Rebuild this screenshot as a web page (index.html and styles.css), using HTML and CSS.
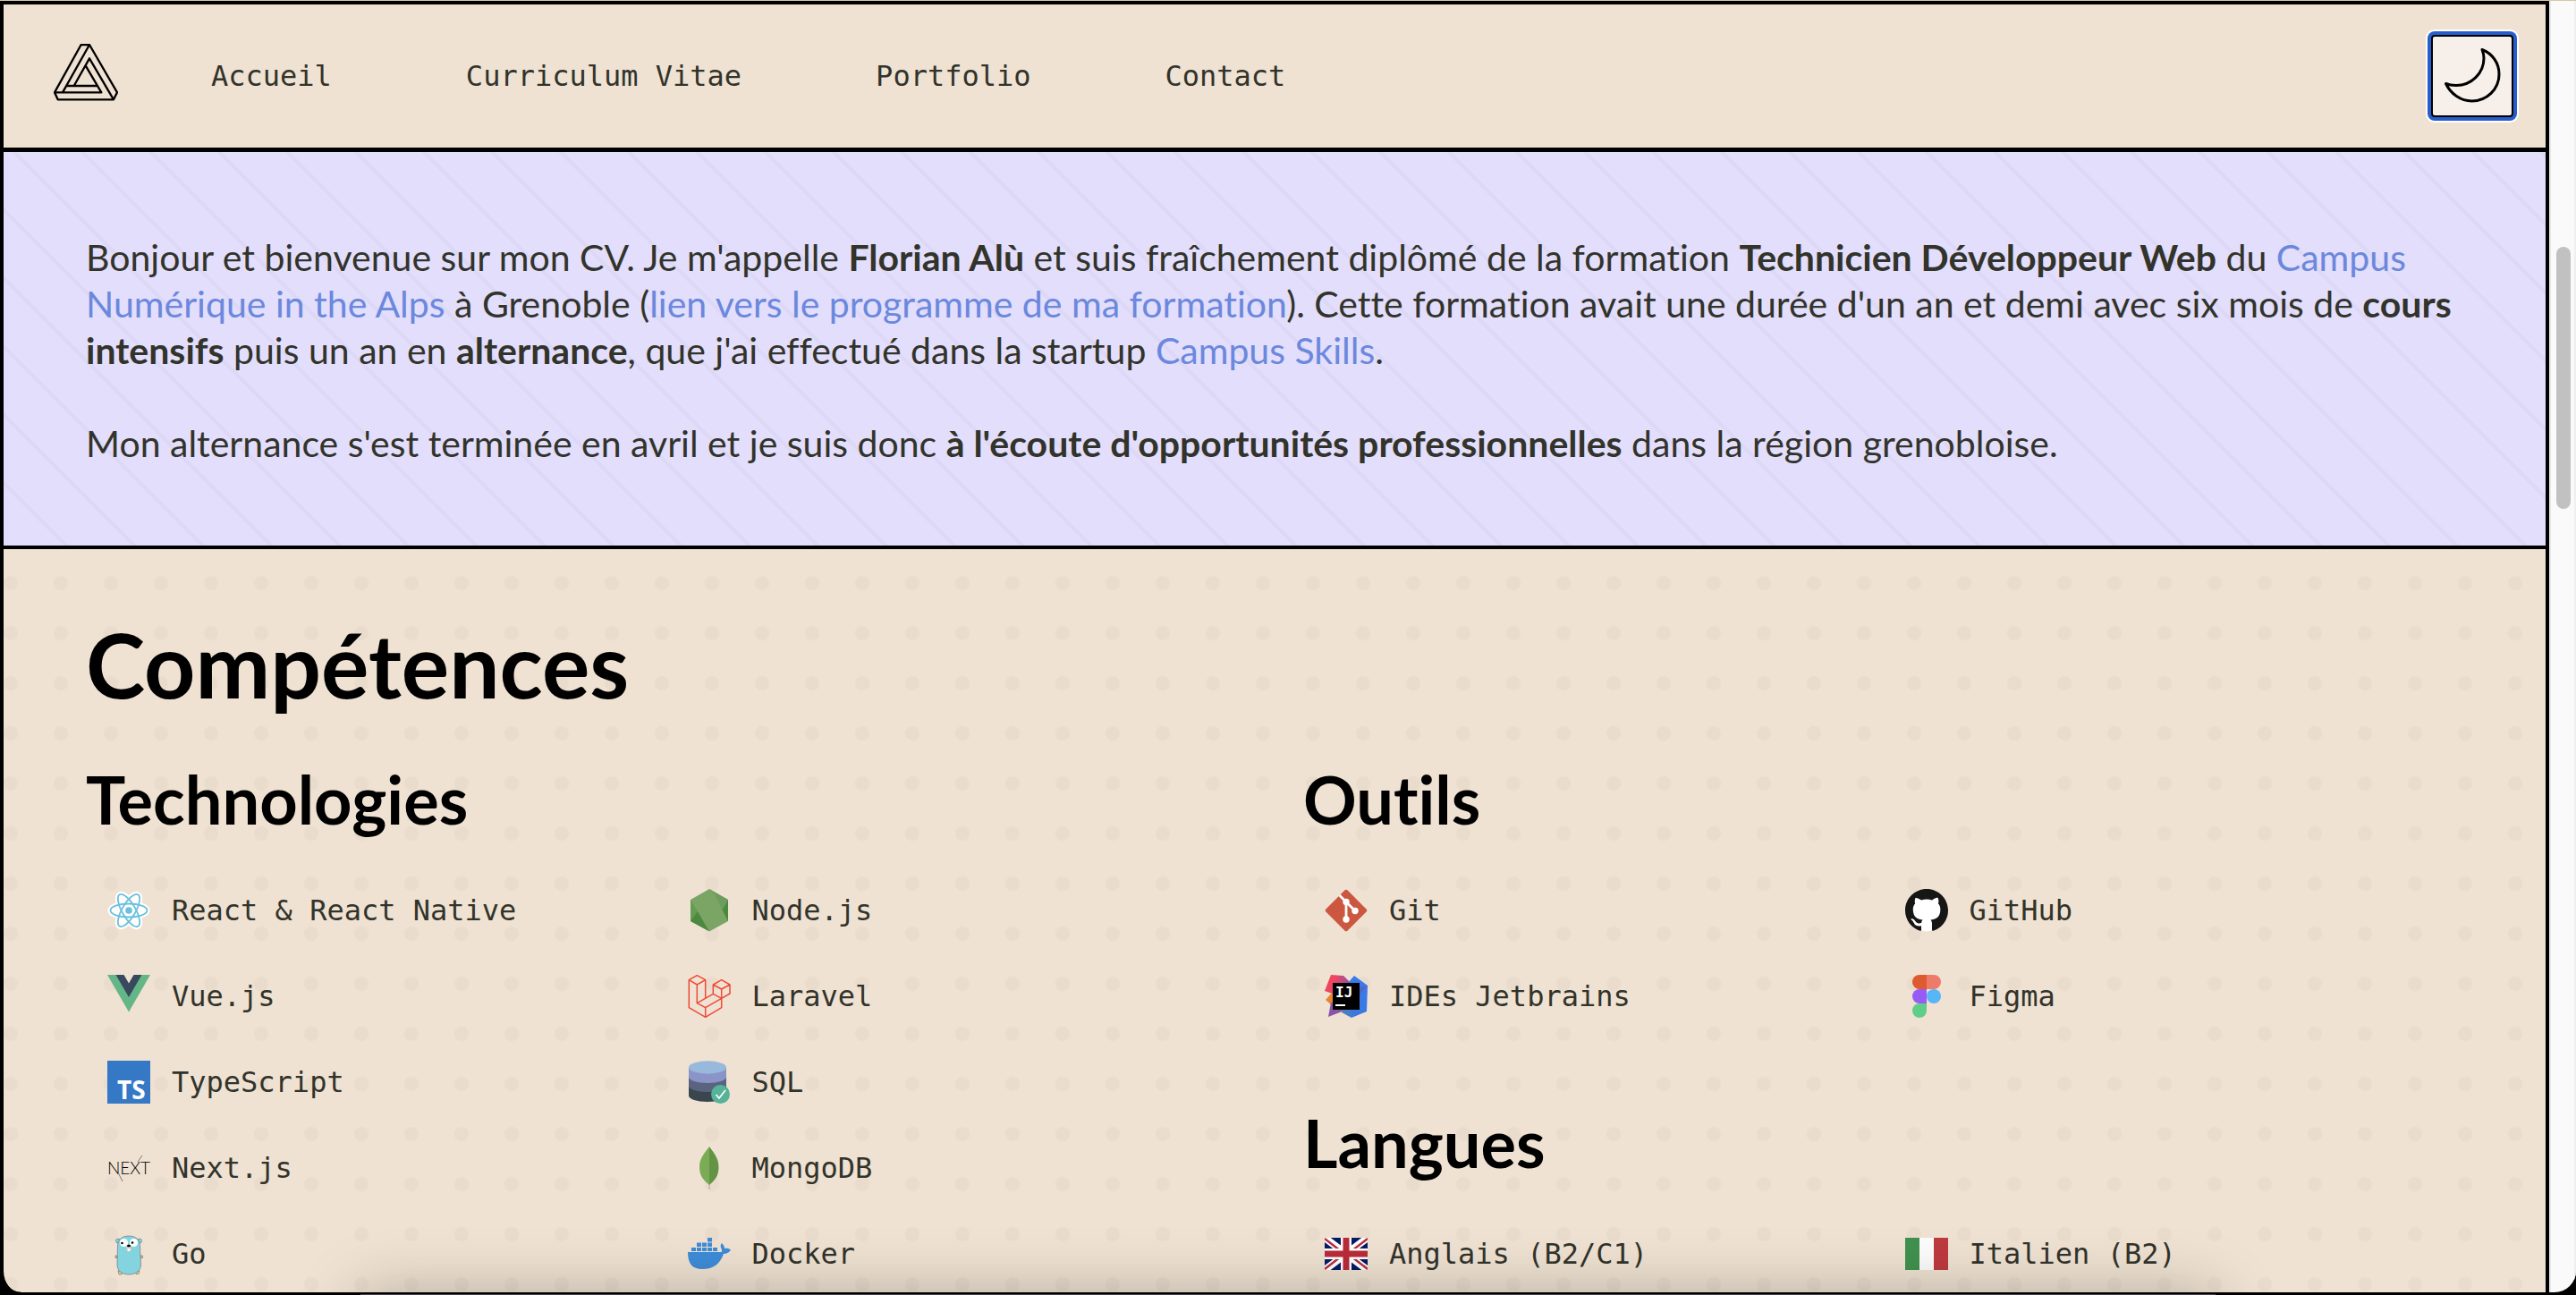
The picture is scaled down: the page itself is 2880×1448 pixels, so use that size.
FILE: index.html
```html
<!DOCTYPE html>
<html lang="fr">
<head>
<meta charset="utf-8">
<title>Florian Alù – Curriculum Vitae</title>
<link rel="stylesheet" href="styles.css">
</head>
<body>
<div class="window">
  <div class="page">
    <header class="header">
      <a href="#" class="logo" aria-label="Accueil">
        <svg viewBox="30 33 216 192" width="72" height="64" fill="none" stroke="#000" stroke-width="7" stroke-linejoin="round">
          <path d="M122 36H150L243 196 231 220H44L33 196ZM150 36 60 196M33 196H190L137 106M72 174H177M98 174 150 82 231 220"/>
        </svg>
      </a>
      <nav class="nav">
        <a href="#">Accueil</a>
        <a href="#">Curriculum Vitae</a>
        <a href="#">Portfolio</a>
        <a href="#">Contact</a>
      </nav>
      <button type="button" class="theme" aria-label="Mode sombre">
        <svg viewBox="0 0 68 68" width="68" height="68" fill="none" stroke="#000" stroke-width="3" stroke-linejoin="round">
          <path d="M45 4.500C57 9 64 20 64 32C64 49 50 62 33.500 62C21 62 10 54 4.500 42.500C8 44 12 44.500 16 44.500C33 44.500 47 31 47 14C47 11 46 7 45 4.500Z"/>
        </svg>
      </button>
    </header>

    <section class="intro">
      <p>Bonjour et bienvenue sur mon CV. Je m'appelle <strong>Florian Alù</strong> et suis fraîchement diplômé de la formation <strong>Technicien Développeur Web</strong> du <a href="#">Campus Numérique in the Alps</a> à Grenoble (<a href="#">lien vers le programme de ma formation</a>). Cette formation avait une durée d'un an et demi avec six mois de <strong>cours intensifs</strong> puis un an en <strong>alternance</strong>, que j'ai effectué dans la startup <a href="#">Campus Skills</a>.</p>
      <p>Mon alternance s'est terminée en avril et je suis donc <strong>à l'écoute d'opportunités professionnelles</strong> dans la région grenobloise.</p>
    </section>

    <main class="skills">
      <h1>Compétences</h1>
      <div class="columns">
        <section class="group">
          <h2>Technologies</h2>
          <ul class="list">
            <li>
              <svg class="icon" viewBox="0 0 48 48">
                <g fill="#fff" stroke="#fff" stroke-width="6"><ellipse cx="24" cy="24" rx="20.500" ry="7.500"/><ellipse cx="24" cy="24" rx="20.500" ry="7.500" transform="rotate(60 24 24)"/><ellipse cx="24" cy="24" rx="20.500" ry="7.500" transform="rotate(120 24 24)"/></g>
                <g fill="none" stroke="#6bc0de" stroke-width="1.800"><ellipse cx="24" cy="24" rx="20.500" ry="7.500"/><ellipse cx="24" cy="24" rx="20.500" ry="7.500" transform="rotate(60 24 24)"/><ellipse cx="24" cy="24" rx="20.500" ry="7.500" transform="rotate(120 24 24)"/></g>
                <circle cx="24" cy="24" r="3.800" fill="#6bc0de"/>
              </svg>
              <span>React &amp; React Native</span>
            </li>
            <li>
              <svg class="icon" viewBox="0 0 48 48">
                <path fill="#7aa565" d="M24 0 45 12V36L24 47.500 3 36V12Z"/>
                <path fill="#6d9d5e" d="M24 0 45 12 38.500 24 29.500 5Z"/>
                <path fill="#659c52" d="M3 12V36L11 25Z"/>
                <path fill="#4d8841" d="M3 36 11 25 23.500 47ZM45 12V36L38.500 23.500Z"/>
              </svg>
              <span>Node.js</span>
            </li>
            <li>
              <svg class="icon" viewBox="0 0 48 48">
                <path fill="#64b687" d="M0 0H48L24 41.500Z"/>
                <path fill="#38495d" d="M9.500 0H38.500L24 25Z"/>
                <path fill="#efe2d2" d="M18.500 0H29.500L24 9.500Z"/>
              </svg>
              <span>Vue.js</span>
            </li>
            <li>
              <svg class="icon" viewBox="0 0 48 48" fill="none" stroke="#ef4a37" stroke-width="1.500" stroke-linejoin="round">
                <path d="M19.700 26V5.700L10.300.7 1.300 5.700V36.700L19.700 47.300 37.700 36.700V16M1.300 5.700 10.300 11 19.700 5.700M10.300 11V31.700L19.700 36.700 37.700 26.300M19.700 36.700V47.300M10.300 31.700 28.300 21.300M28.300 11 37.700 5.700 47 11V21L37.700 26.300 28.300 21.300V11L37.700 16 47 11"/>
              </svg>
              <span>Laravel</span>
            </li>
            <li>
              <svg class="icon" viewBox="0 0 48 48">
                <rect width="48" height="48" fill="#3478c6"/>
                <text class="ts" x="11" y="43">TS</text>
              </svg>
              <span>TypeScript</span>
            </li>
            <li>
              <svg class="icon" viewBox="0 0 48 48">
                <path fill="#3a464e" d="M1 7V39C1 43 10 46 22 46S43 43 43 39V7Z"/>
                <path fill="#5a6380" d="M1 7V28C1 32 10 35 22 35S43 32 43 28V7Z"/>
                <path fill="#8b94c8" d="M1 7V18C1 22 10 25 22 25S43 22 43 18V7Z"/>
                <ellipse cx="22" cy="7.500" rx="21" ry="7.200" fill="#98b8dc"/>
                <circle cx="36.500" cy="37.500" r="10.500" fill="#56b398"/>
                <path d="M31.500 38 35 42 42 33" fill="none" stroke="#fff" stroke-width="1.700"/>
              </svg>
              <span>SQL</span>
            </li>
            <li>
              <svg class="icon" viewBox="0 0 48 48">
                <text class="next" x="24" y="31">NEXT</text>
                <path d="M12 29 17 39M34 17 39 10" stroke="#777"/>
              </svg>
              <span>Next.js</span>
            </li>
            <li>
              <svg class="icon" viewBox="0 0 48 48">
                <path stroke="#c4bdb8" stroke-width="1.800" d="M24 38V48"/>
                <path fill="#7aac56" d="M24 0C20 6 13 12 13 23C13 33 18 38 24 43Z"/>
                <path fill="#659345" d="M24 0C28 6 34.500 12 34.500 23C34.500 33 30 38 24 43Z"/>
              </svg>
              <span>MongoDB</span>
            </li>
            <li>
              <svg class="icon" viewBox="0 0 48 48">
                <g fill="#84d4e0" stroke="#555" stroke-width=".5">
                  <circle cx="12" cy="9.500" r="2.500"/><circle cx="36" cy="9.500" r="2.500"/>
                  <path fill="#e6c79f" d="M11 26h-2v2.500h2zM37 26h2.500v2.500h-2.500zM12 43l1 4h3l1-3zM36 43l-1 3.500h-3l-1-3z"/>
                  <path d="M24 4C32 4 36 8 36.500 15L37.500 36C37.500 43 32 47 24 47S11 43 11 36L11.500 15C12 8 16 4 24 4Z"/>
                </g>
                <circle cx="18.500" cy="11.500" r="4.600" fill="#fff"/><circle cx="29.500" cy="11.500" r="4.600" fill="#fff"/>
                <circle cx="16.500" cy="12" r="1.300"/><circle cx="28" cy="11.500" r="1.300"/>
                <path fill="#e6c79f" d="M21 16h6v3h-6z"/><ellipse cx="24" cy="15" rx="2" ry="1.300"/><path fill="#fff" d="M22.500 18h3v3h-3z"/>
              </svg>
              <span>Go</span>
            </li>
            <li>
              <svg class="icon" viewBox="0 0 48 48" fill="#3f8cd8">
                <path d="M0 22H37C39 22 38 19 37 17C36 15 37 13 38 12C40 14 41 16 41 18C44 17.500 46 18 48 19.500C46 23 43 24 40 24C36 35 29 41 16 41C5 41 0 35 0 22Z"/>
                <path d="M22 6h5v4.500h-5zM10 11.500h5v4.500h-5zM16 11.500h5v4.500h-5zM22 11.500h5v4.500h-5zM4 17h5v4h-5zM10 17h5v4h-5zM16 17h5v4h-5zM22 17h5v4h-5zM28 17h5v4h-5z"/>
              </svg>
              <span>Docker</span>
            </li>
          </ul>
        </section>

        <div class="stack">
          <section class="group">
            <h2>Outils</h2>
            <ul class="list">
              <li>
                <svg class="icon" viewBox="0 0 48 48">
                  <rect x="7" y="7" width="34" height="34" rx="2" fill="#cc5740" transform="rotate(45 24 24)"/>
                  <path d="M16.500 7 24 14.500V34M24 14.500 34 24.500" fill="none" stroke="#fff" stroke-width="2.800"/>
                  <g fill="#fff"><circle cx="24" cy="14.500" r="3.700"/><circle cx="24" cy="34" r="3.700"/><circle cx="34" cy="24.500" r="3.700"/></g>
                </svg>
                <span>Git</span>
              </li>
              <li>
                <svg class="icon" viewBox="0 0 16 16">
                  <circle cx="8" cy="8" r="7.800" fill="#fff"/>
                  <path fill="#161614" d="M8 0C3.580 0 0 3.580 0 8c0 3.540 2.290 6.530 5.470 7.590.4.070.55-.17.55-.38 0-.19-.01-.82-.01-1.490-2.010.37-2.530-.49-2.690-.94-.09-.23-.48-.94-.82-1.130-.28-.15-.68-.52-.01-.53.63-.01 1.080.58 1.230.82.72 1.210 1.870.87 2.330.66.07-.52.28-.87.51-1.070-1.780-.2-3.640-.89-3.640-3.950 0-.87.31-1.590.82-2.150-.08-.2-.36-1.020.08-2.120 0 0 .67-.21 2.200.82.64-.18 1.320-.27 2-.27s1.360.09 2 .27c1.530-1.040 2.200-.82 2.200-.82.44 1.100.16 1.920.08 2.120.51.56.82 1.270.82 2.150 0 3.070-1.870 3.750-3.650 3.950.29.25.54.73.54 1.480 0 1.070-.01 1.930-.01 2.200 0 .21.15.46.55.38A8.010 8.010 0 0 0 16 8c0-4.420-3.580-8-8-8Z"/>
                </svg>
                <span>GitHub</span>
              </li>
              <li>
                <svg class="icon" viewBox="0 0 48 48">
                  <defs>
                    <linearGradient id="ij-a" x1="0" y1="0" x2="1" y2="0"><stop offset=".4" stop-color="#ee4560"/><stop offset="1" stop-color="#8a55a8"/></linearGradient>
                    <linearGradient id="ij-b" x1="0" y1="1" x2="1" y2="0"><stop offset="0" stop-color="#5b85a8"/><stop offset=".3" stop-color="#3a78e0"/><stop offset="1" stop-color="#3b7af0"/></linearGradient>
                  </defs>
                  <path fill="#e9862f" d="M9 19 1 28 9 35 18 30Z"/>
                  <path fill="#8a55a8" d="M7 31 4 47 22 40 30 30Z"/>
                  <path fill="url(#ij-a)" d="M7 0 21 1 29 9 20 25 0 18Z"/>
                  <path fill="url(#ij-b)" d="M33 1 48 12 47 41 30 48 19 42 26 9Z"/>
                  <path fill="#5068c4" d="M48 12 38 24V14Z"/>
                  <rect x="9" y="9" width="30" height="30"/>
                  <rect x="12" y="33" width="11" height="2" fill="#fff"/>
                  <text class="ij" x="12" y="25">IJ</text>
                </svg>
                <span>IDEs Jetbrains</span>
              </li>
              <li>
                <svg class="icon" viewBox="0 0 48 48">
                  <path fill="#de5a30" d="M24 0V16H16A8 8 0 0 1 16 0Z"/>
                  <path fill="#ee7b69" d="M24 0V16H32A8 8 0 0 0 32 0Z"/>
                  <path fill="#985cf6" d="M24 16V32H16A8 8 0 0 1 16 16Z"/>
                  <circle cx="32" cy="24" r="8" fill="#56b6f8"/>
                  <path fill="#60ce89" d="M24 32V40A8 8 0 1 1 16 32Z"/>
                </svg>
                <span>Figma</span>
              </li>
            </ul>
          </section>
          <section class="group">
            <h2>Langues</h2>
            <ul class="list">
              <li>
                <svg class="icon" viewBox="0 0 48 48">
                  <svg y="6" width="48" height="36" viewBox="0 0 48 36">
                    <rect width="48" height="36" fill="#071b65"/>
                    <path d="M0 0 48 36M48 0 0 36" stroke="#fff" stroke-width="8"/>
                    <path d="M0 1 22 18M48 35 26 18M48 1 26 18M0 35 22 18" stroke="#b92c38" stroke-width="2.400"/>
                    <path d="M24 0V36M0 18H48" stroke="#fff" stroke-width="12"/>
                    <path d="M24 0V36M0 18H48" stroke="#b92c38" stroke-width="7"/>
                  </svg>
                </svg>
                <span>Anglais (B2/C1)</span>
              </li>
              <li>
                <svg class="icon" viewBox="0 0 48 48">
                  <path fill="#41914f" d="M0 6H16V42H0Z"/><path fill="#fcfcfc" d="M16 6H32V42H16Z"/><path fill="#be3a3d" d="M32 6H48V42H32Z"/>
                </svg>
                <span>Italien (B2)</span>
              </li>
            </ul>
          </section>
        </div>
      </div>
    </main>
  </div>
  <div class="scrollbar"><div class="thumb"></div></div>
</div>
<div class="dock"></div>
</body>
</html>
```
FILE: styles.css
```css
* {
  box-sizing: border-box;
}

body {
  margin: 0;
  height: 100vh;
  position: relative;
  overflow: hidden;
  padding-bottom: 3px;
  background: #000;
  color: #32332b;
  font-family: "DejaVu Sans Mono", monospace;
  font-size: 32px;
  font-variant-ligatures: none;
}

a {
  color: inherit;
  text-decoration: none;
}

.window {
  display: flex;
  height: 100%;
  border-top: 1px solid #d9c7a5;
  border-radius: 0 0 24px 24px;
  overflow: hidden;
  background: #000;
}

.page {
  flex: 1;
  min-width: 0;
  border: solid #000;
  border-width: 4px 4px 0;
  border-bottom-left-radius: 24px;
  overflow: hidden;
  background: #efe2d2;
}

/* Header */
.header {
  display: flex;
  align-items: center;
  height: 165px;
  padding: 0 36px 0 56px;
  border-bottom: 5px solid #000;
}

.logo {
  display: flex;
  margin-right: 104px;
  padding-bottom: 8px;
}

.nav {
  display: flex;
  gap: 150px;
}

.theme {
  display: grid;
  place-items: center;
  width: 92px;
  height: 92px;
  margin-left: auto;
  padding: 0;
  border: 2px solid #000;
  border-radius: 4px;
  background: #f7efea;
  box-shadow: 0 0 0 4px #265ecb, 0 0 0 6px #fff;
}

/* Introduction */
.intro {
  padding: 92px 92px 88px;
  border-bottom: 4px solid #000;
  background-color: #e2defc;
  background-image: repeating-linear-gradient(45deg, transparent 0 47px, #dcd8f5 48px 51px, transparent 52px 54px);
  background-clip: padding-box;
  font-family: Lato, sans-serif;
  font-size: 41px;
  line-height: 52px;
}

.intro p {
  margin: 0 0 52px;
}

.intro p:last-child {
  margin-bottom: 0;
}

.intro a {
  color: #6b88dd;
}

/* Skills */
.skills {
  padding: 68px 92px;
  background-image: radial-gradient(circle, #e9dccc 7px, transparent 9px);
  background-size: 56px 56px;
  background-position: -20px 10px;
}

h1,
h2 {
  margin: 0;
  color: #000;
  font-family: Lato, sans-serif;
  font-weight: 700;
}

h1 {
  margin-bottom: 44px;
  font-size: 100px;
  line-height: 120px;
}

h2 {
  margin-bottom: 28px;
  font-size: 74px;
  line-height: 96px;
}

.columns {
  display: grid;
  grid-template-columns: 1fr 1fr;
  gap: 64px;
}

.stack {
  display: flex;
  flex-direction: column;
  gap: 68px;
}

.list {
  display: grid;
  grid-template-columns: 1fr 1fr;
  margin: 0;
  padding: 0;
  list-style: none;
}

.list li {
  display: flex;
  align-items: center;
  gap: 24px;
  height: 96px;
  padding: 0 24px;
}

.icon {
  flex: none;
  width: 48px;
  height: 48px;
  overflow: visible;
}

.ts {
  fill: #fff;
  font-family: "Open Sans", sans-serif;
  font-size: 28px;
  font-weight: 700;
}

.next {
  fill: #000;
  font-family: Lato, sans-serif;
  font-size: 19px;
  font-weight: 300;
  text-anchor: middle;
}

.ij {
  fill: #fff;
  font-family: "DejaVu Sans Mono", monospace;
  font-size: 16px;
  font-weight: 700;
}

/* Scrollbar */
.scrollbar {
  position: relative;
  width: 30px;
  border-left: 2px solid #e8e8e8;
  border-right: 2px solid #efefef;
  background: #fafafa;
}

.thumb {
  position: absolute;
  top: 275px;
  left: 6px;
  width: 16px;
  height: 293px;
  border-radius: 8px;
  background: #c1c1c1;
}

/* Panel sitting just under the window, seen only by its shadow */
.dock {
  position: absolute;
  top: calc(100% - 1px);
  left: 14%;
  right: 14%;
  height: 200px;
  background: #45404f;
  box-shadow: 0 0 70px rgba(0, 0, 0, .26);
}
```
